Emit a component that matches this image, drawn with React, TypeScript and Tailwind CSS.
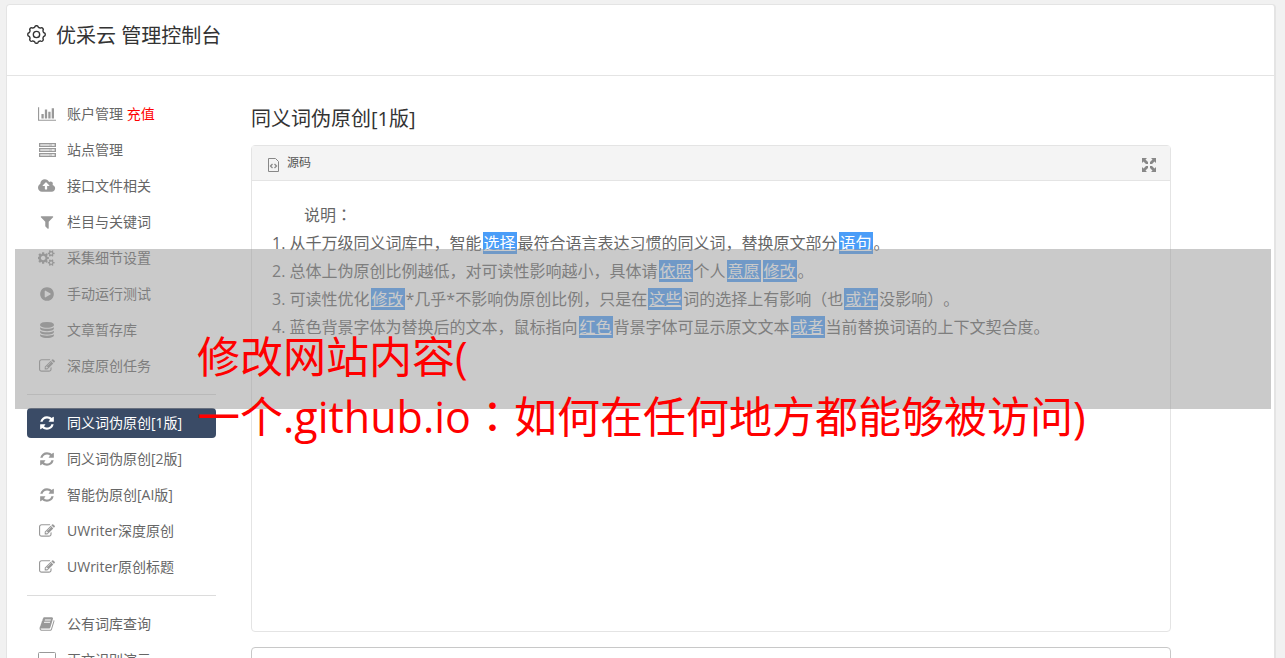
import React from "react";

interface IconProps {
  className?: string;
}

interface GlyphProps extends IconProps {
  d: string;
  box?: string;
}

function Glyph({ d, box = "0 0 1792 1792", className = "h-4" }: GlyphProps) {
  return (
    <svg viewBox={box} className={className} fill="currentColor" aria-hidden="true">
      <path d={d} />
    </svg>
  );
}

const paths = {
  chart:
    "M640 896v512h-256v-512h256zm384-512v1024h-256v-1024h256zm1024 1152v128h-2048v-1536h128v1408h1920zm-640-896v768h-256v-768h256zm384-384v1152h-256v-1152h256z",
  upload:
    "M1216 864q0-14-9-23l-352-352q-9-9-23-9t-23 9l-351 351q-10 12-10 24 0 14 9 23t23 9h224v352q0 13 9.5 22.5t22.5 9.5h192q13 0 22.5-9.5t9.5-22.5v-352h224q13 0 22.5-9.5t9.5-22.5zm640 288q0 159-112.5 271.5t-271.5 112.5h-1088q-185 0-316.5-131.5t-131.5-316.5q0-130 70-240t188-165q-2-30-2-43 0-212 150-362t362-150q156 0 285.5 87t188.5 231q71-62 166-62 106 0 181 75t75 181q0 76-41 138 130 31 213.5 135.5t83.5 238.5z",
  filter:
    "M1595 295q17 41-14 70l-493 493v742q0 42-39 59-13 5-25 5-27 0-45-19l-256-256q-19-19-19-45v-486l-493-493q-31-29-14-70 17-39 59-39h1280q42 0 59 39z",
  cogs:
    "M832 896q0-106-75-181t-181-75-181 75-75 181 75 181 181 75 181-75 75-181zm768 512q0-52-38-90t-90-38-90 38-38 90q0 53 37.5 90.5t90.5 37.5 90.5-37.5 37.5-90.5zm0-1024q0-52-38-90t-90-38-90 38-38 90q0 53 37.5 90.5t90.5 37.5 90.5-37.5 37.5-90.5zm-384 421v185q0 10-7 19.5t-16 10.5l-155 24q-11 35-32 76 34 48 90 115 7 11 7 20 0 12-7 19-23 30-82.5 89.5t-78.5 59.5q-11 0-21-7l-115-90q-37 19-77 31-11 108-23 155-7 24-30 24h-186q-11 0-20-7.5t-10-17.5l-23-153q-34-10-75-31l-118 89q-7 7-20 7-11 0-21-8-144-133-144-160 0-9 7-19 10-14 41-53t47-61q-23-44-35-82l-152-24q-10-1-17-9.5t-7-19.5v-185q0-10 7-19.5t16-10.5l155-24q11-35 32-76-34-48-90-115-7-11-7-20 0-12 7-20 22-30 82-89t79-59q11 0 21 7l115 90q34-18 77-32 11-108 23-154 7-24 30-24h186q11 0 20 7.5t10 17.5l23 153q34 10 75 31l118-89q8-7 20-7 11 0 21 8 144 133 144 160 0 8-7 19-12 16-42 54t-45 60q23 48 34 82l152 23q10 2 17 10.5t7 19.5zm640 533v140q0 16-149 31-12 27-30 52 51 113 51 138 0 4-4 7-122 71-124 71-8 0-46-47t-52-68q-20 2-30 2t-30-2q-14 21-52 68t-46 47q-2 0-124-71-4-3-4-7 0-25 51-138-18-25-30-52-149-15-149-31v-140q0-16 149-31 13-29 30-52-51-113-51-138 0-4 4-7 4-2 35-20t59-34 30-16q8 0 46 46.5t52 67.5q20-2 30-2t30 2q51-71 92-112l6-2q4 0 124 70 4 3 4 7 0 25-51 138 17 23 30 52 149 15 149 31zm0-1024v140q0 16-149 31-12 27-30 52 51 113 51 138 0 4-4 7-122 71-124 71-8 0-46-47t-52-68q-20 2-30 2t-30-2q-14 21-52 68t-46 47q-2 0-124-71-4-3-4-7 0-25 51-138-18-25-30-52-149-15-149-31v-140q0-16 149-31 13-29 30-52-51-113-51-138 0-4 4-7 4-2 35-20t59-34 30-16q8 0 46 46.5t52 67.5q20-2 30-2t30 2q51-71 92-112l6-2q4 0 124 70 4 3 4 7 0 25-51 138 17 23 30 52 149 15 149 31z",
  play:
    "M896 128q209 0 385.5 103t279.5 279.5 103 385.5-103 385.5-279.5 279.5-385.5 103-385.5-103-279.5-279.5-103-385.5 103-385.5 279.5-279.5 385.5-103zm384 823q32-18 32-55t-32-55l-544-320q-31-19-64-1-32 19-32 56v640q0 37 32 56 16 8 32 8 17 0 32-9z",
  database:
    "M896 768q237 0 443-43t325-127v170q0 69-103 128t-280 93.5-385 34.5-385-34.5-280-93.5-103-128v-170q119 84 325 127t443 43zm0 768q237 0 443-43t325-127v170q0 69-103 128t-280 93.5-385 34.5-385-34.5-280-93.5-103-128v-170q119 84 325 127t443 43zm0-384q237 0 443-43t325-127v170q0 69-103 128t-280 93.5-385 34.5-385-34.5-280-93.5-103-128v-170q119 84 325 127t443 43zm0-1152q208 0 385 34.5t280 93.5 103 128v128q0 69-103 128t-280 93.5-385 34.5-385-34.5-280-93.5-103-128v-128q0-69 103-128t280-93.5 385-34.5z",
  edit:
    "M888 1184l116-116-152-152-116 116v56h96v96h56zm440-720q-16-16-33 1l-350 350q-17 17-1 33t33-1l350-350q17-17 1-33zm80 594v190q0 119-84.5 203.5t-203.5 84.5h-832q-119 0-203.5-84.5t-84.5-203.5v-832q0-119 84.5-203.5t203.5-84.5h832q63 0 117 25 15 7 18 23 3 17-9 29l-49 49q-14 14-32 8-23-6-45-6h-832q-66 0-113 47t-47 113v832q0 66 47 113t113 47h832q66 0 113-47t47-113v-126q0-13 9-22l64-64q15-15 35-7t20 29zm-96-738l288 288-672 672h-288v-288zm444 132l-92 92-288-288 92-92q28-28 68-28t68 28l152 152q28 28 28 68t-28 68z",
  refresh:
    "M1639 1056q0 5-1 7-64 268-268 434.5t-478 166.5q-146 0-282.5-55t-243.5-157l-129 129q-19 19-45 19t-45-19-19-45v-448q0-26 19-45t45-19h448q26 0 45 19t19 45-19 45l-137 137q71 66 161 102t187 36q134 0 250-65t186-179q11-17 53-117 8-23 30-23h192q13 0 22.5 9.5t9.5 22.5zm25-800v448q0 26-19 45t-45 19h-448q-26 0-45-19t-19-45 19-45l138-138q-148-137-349-137-134 0-250 65t-186 179q-11 17-53 117-8 23-30 23h-199q-13 0-22.5-9.5t-9.5-22.5v-7q65-268 270-434.5t480-166.5q146 0 284 55.5t245 156.5l130-129q19-19 45-19t45 19 19 45z",
  book:
    "M1703 478q40 57 18 129l-275 906q-19 64-76.5 107.5t-122.5 43.5h-923q-77 0-148.5-53.5t-99.5-131.5q-24-67-2-127 0-4 3-27t4-37q1-8-3-21.5t-3-19.5q2-11 8-21t16.5-23.5 16.5-23.5q23-38 45-91.5t30-91.5q3-10 .5-30t-.5-28q3-11 17-28t17-23q21-36 42-92t25-90q1-9-2.5-32t.5-28q4-13 22-30.5t22-22.5q19-26 42.5-84.5t27.5-96.5q1-8-3-25.5t-2-26.5q2-8 9-18t18-23 17-21q8-12 16.5-30.5t15-35 16-36 19.5-32 26.5-23.5 36-11.5 47.5 5.5l-1 3q38-9 51-9h761q74 0 114 56t18 130l-274 906q-36 119-71.5 153.5t-128.5 34.5h-869q-27 0-38 15-11 16-1 43 24 70 144 70h923q29 0 56-15.5t35-41.5l300-987q7-22 5-57 38 15 59 43zm-1064 2q-4 13 2 22.5t20 9.5h608q13 0 25.5-9.5t16.5-22.5l21-64q4-13-2-22.5t-20-9.5h-608q-13 0-25.5 9.5t-16.5 22.5zm-83 256q-4 13 2 22.5t20 9.5h608q13 0 25.5-9.5t16.5-22.5l21-64q4-13-2-22.5t-20-9.5h-608q-13 0-25.5 9.5t-16.5 22.5z",
};

function ServerIcon() {
  return (
    <svg viewBox="0 0 17 14" className="h-3.5 w-[17px]" fill="none" stroke="currentColor" aria-hidden="true">
      {[0, 5, 10].map((y) => (
        <g key={y}>
          <rect x="0.5" y={y + 0.5} width="16" height="3" fill="currentColor" fillOpacity="0.55" />
          <path d={`M2 ${y + 2}h8`} stroke="#ffffff" strokeOpacity="0.5" />
          <path d={`M13 ${y + 2}h2`} stroke="#ffffff" />
        </g>
      ))}
    </svg>
  );
}

function MonitorIcon() {
  return (
    <svg viewBox="0 0 18 16" className="h-4 w-[18px]" fill="none" stroke="currentColor" aria-hidden="true">
      <rect x="0.5" y="0.5" width="17" height="12" rx="1" />
      <path d="M5 15h8" strokeWidth="2" />
    </svg>
  );
}

// Eight-lobed outline, sampled round the circle
const gearPoints = Array.from({ length: 96 }, (_, i) => {
  const a = (i / 96) * Math.PI * 2;
  const r = 7.6 + 0.7 * Math.tanh(2 * Math.cos(8 * a));
  return `${(9 + r * Math.sin(a)).toFixed(2)},${(9 - r * Math.cos(a)).toFixed(2)}`;
}).join(" ");

function GearIcon({ className }: IconProps) {
  return (
    <svg viewBox="0 0 18 18" className={className} fill="none" stroke="currentColor" strokeWidth="1.3" aria-hidden="true">
      <polygon points={gearPoints} strokeLinejoin="round" />
      <circle cx="9" cy="9" r="3" />
    </svg>
  );
}

function CodeFileIcon({ className }: IconProps) {
  return (
    <svg viewBox="0 0 11 14" className={className} fill="none" stroke="currentColor" aria-hidden="true">
      <path d="M0.5 0.5h7l3 3v10h-10z" />
      <path d="M4.5 6L2.5 8l2 2M6.5 6l2 2-2 2" strokeWidth="1.3" />
    </svg>
  );
}

function ExpandIcon() {
  return (
    <svg viewBox="0 0 14 14" className="h-3.5 w-3.5" fill="currentColor" aria-hidden="true">
      {[0, 90, 180, 270].map((deg) => (
        <path key={deg} transform={`rotate(${deg} 7 7)`} d="M0 0h5L3.5 1.5 6 4v2H4L1.5 3.5 0 5z" />
      ))}
    </svg>
  );
}

interface MenuItem {
  label: string;
  icon: React.ReactNode;
  extra?: string;
  active?: boolean;
}

const menu: MenuItem[][] = [
  [
    { label: "账户管理", extra: "充值", icon: <Glyph d={paths.chart} box="0 0 2048 1792" /> },
    { label: "站点管理", icon: <ServerIcon /> },
    { label: "接口文件相关", icon: <Glyph d={paths.upload} box="-64 0 1920 1792" /> },
    { label: "栏目与关键词", icon: <Glyph d={paths.filter} /> },
    { label: "采集细节设置", icon: <Glyph d={paths.cogs} box="0 0 1920 1792" /> },
    { label: "手动运行测试", icon: <Glyph d={paths.play} /> },
    { label: "文章暂存库", icon: <Glyph d={paths.database} /> },
    { label: "深度原创任务", icon: <Glyph d={paths.edit} /> },
  ],
  [
    { label: "同义词伪原创[1版]", active: true, icon: <Glyph d={paths.refresh} /> },
    { label: "同义词伪原创[2版]", icon: <Glyph d={paths.refresh} /> },
    { label: "智能伪原创[AI版]", icon: <Glyph d={paths.refresh} /> },
    { label: "UWriter深度原创", icon: <Glyph d={paths.edit} /> },
    { label: "UWriter原创标题", icon: <Glyph d={paths.edit} /> },
  ],
  [
    { label: "公有词库查询", icon: <Glyph d={paths.book} /> },
    { label: "正文识别演示", icon: <MonitorIcon /> },
  ],
];

function Sidebar() {
  return (
    <nav className="w-[189px] shrink-0">
      {menu.map((group, i) => (
        <ul
          key={i}
          className={`flex flex-col gap-1.5 ${i > 0 ? "mt-[13px] border-t border-[#dcdcdc] pt-[13px]" : ""}`}
        >
          {group.map((item) => (
            <li key={item.label}>
              <a
                href="#"
                className={`flex h-[30px] items-center rounded text-sm whitespace-nowrap ${
                  item.active ? "bg-[#3a4b66] text-white" : "text-[#666666]"
                }`}
              >
                <span className={`flex w-10 justify-center ${item.active ? "text-white" : "text-[#999999]"}`}>
                  {item.icon}
                </span>
                <span>
                  {item.label}
                  {item.extra && <span className="text-[#ff0000]"> {item.extra}</span>}
                </span>
              </a>
            </li>
          ))}
        </ul>
      ))}
    </nav>
  );
}

function Word({ children }: { children: string }) {
  return (
    <a href="#" className="mx-px bg-[#4a9df8] px-px text-white underline">
      {children}
    </a>
  );
}

// Full-width colon centred in its cell
function Colon() {
  return <span className="font-['Noto_Sans_CJK_JP',sans-serif] leading-none">：</span>;
}

export default function App() {
  return (
    <div className="relative h-screen overflow-hidden bg-[#f1f1f1] pt-1 pr-[9px] pl-1.5 font-['Open_Sans','Noto_Sans_CJK_SC',sans-serif] [text-spacing-trim:space-all]">
      <div className="min-h-full rounded-t border border-r-2 border-[#e4e4e4] bg-white">
        <header className="flex h-[71px] items-center border-b border-[#e4e4e4] pb-2 pl-5 text-[#333333]">
          <GearIcon className="mb-1 h-[19px] w-[19px]" />
          <h1 className="ml-2.5 text-xl leading-7">优采云 管理控制台</h1>
        </header>

        <div className="flex gap-[35px] pt-[23px] pl-5">
          <Sidebar />

          <main className="mr-4 w-full max-w-[920px] pt-1.5">
            <h2 className="text-xl leading-7 text-[#333333]">同义词伪原创[1版]</h2>

            <section className="mt-3 min-h-[487px] rounded border border-[#e4e4e4]">
              <div className="flex h-[35px] items-center justify-between border-b border-[#e4e4e4] bg-[#f4f4f4] pr-3.5 pl-4 text-[#888888]">
                <div className="flex items-center gap-2">
                  <CodeFileIcon className="mt-1 h-3.5 w-[11px]" />
                  <span className="text-xs text-[#555555]">源码</span>
                </div>
                <button type="button" aria-label="全屏" className="mt-1">
                  <ExpandIcon />
                </button>
              </div>

              <div className="px-5 pt-5 text-base leading-7 text-[#666666]">
                <p className="indent-8">
                  说明
                  <Colon />
                </p>
                <ol className="list-inside list-decimal">
                  <li>
                    从千万级同义词库中，智能<Word>选择</Word>最符合语言表达习惯的同义词，替换原文部分<Word>语句</Word>。
                  </li>
                  <li>
                    总体上伪原创比例越低，对可读性影响越小，具体请<Word>依照</Word>个人<Word>意愿</Word>
                    <Word>修改</Word>。
                  </li>
                  <li>
                    可读性优化<Word>修改</Word>*几乎*不影响伪原创比例，只是在<Word>这些</Word>词的选择上有影响（也
                    <Word>或许</Word>没影响）。
                  </li>
                  <li>
                    蓝色背景字体为替换后的文本，鼠标指向<Word>红色</Word>背景字体可显示原文文本<Word>或者</Word>
                    当前替换词语的上下文契合度。
                  </li>
                </ol>
              </div>
            </section>

            <section className="mt-[15px] h-24 rounded border border-[#c8c8c8]" />
          </main>
        </div>
      </div>

      {/* Caption band across the page */}
      <div className="pointer-events-none absolute top-[249px] right-3.5 left-[15px] h-40 bg-[#969696]/50 pt-[78px] pl-[182px]">
        <p className="text-[43px] leading-[60px] whitespace-nowrap text-[#ff0000]">
          修改网站内容(
          <br />
          一个.github.io
          <Colon />
          如何在任何地方都能够被访问)
        </p>
      </div>
    </div>
  );
}
